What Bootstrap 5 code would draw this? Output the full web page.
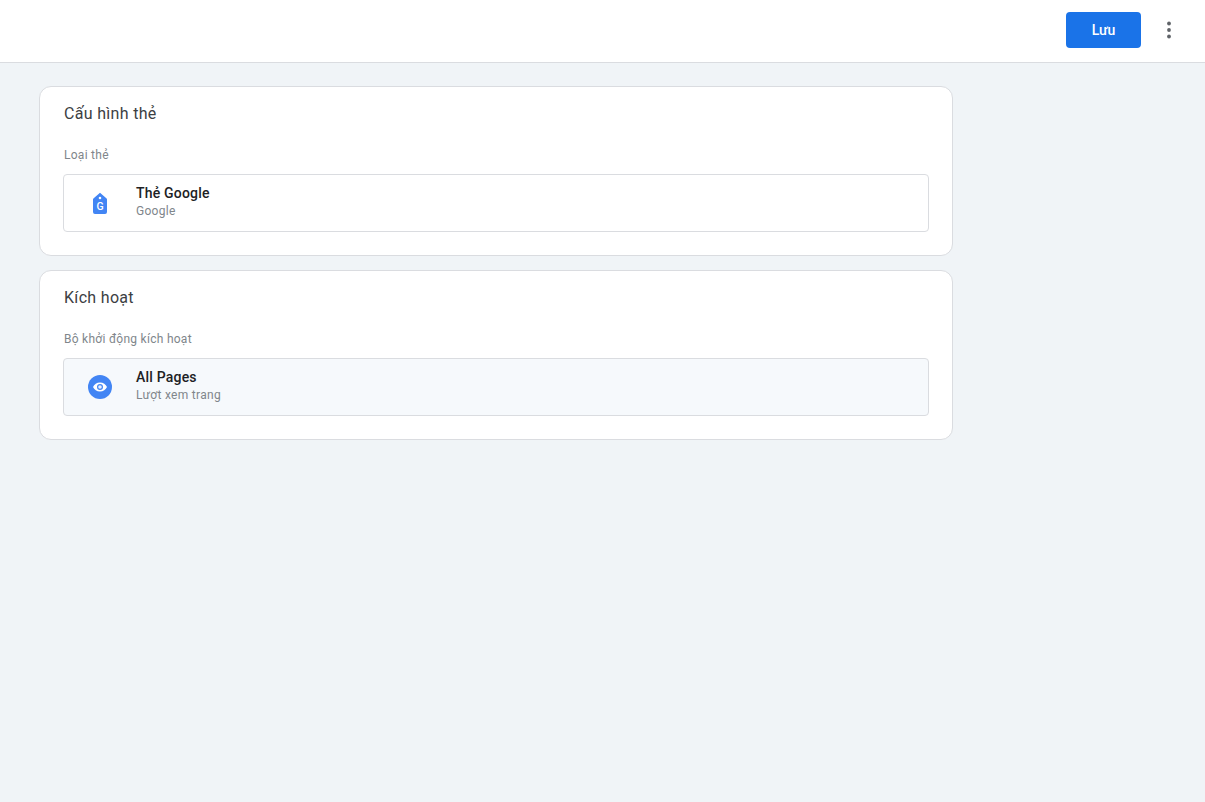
<!DOCTYPE html>
<html lang="vi">
<head>
<meta charset="utf-8">
<title>Thẻ Google</title>
<link rel="stylesheet" href="https://cdn.jsdelivr.net/npm/bootstrap@5.3.0/dist/css/bootstrap.min.css">
<style>
html,body{height:100%}
body{background:#f0f4f7;font-family:Roboto,"Liberation Sans",sans-serif;color:#202124;overflow:hidden}
.top-bar{height:63px;background:#fff;border-bottom:1px solid #dadce0;padding:0 24px 2px 0}
.save-btn{width:75px;height:36px;background:#1a73e8;border:0;border-radius:4px;color:#fff;font-size:14px;font-weight:500;padding:0}
.save-btn:hover{background:#1a73e8;color:#fff}
.dots-btn{width:24px;height:24px;margin-left:16px;border:0;background:none;padding:0;line-height:0}
.page-body{padding:23px 0 0 39px;width:914px;box-sizing:content-box}
.tag-card{width:914px;height:170px;background:#fff;border:1px solid #dadce0;border-radius:12px;padding:0 23px;margin-bottom:14px}
.tag-title{font-size:16px;font-weight:400;line-height:24px;margin:15px 0 0 1px;color:#3c4043;letter-spacing:.32px}
.tag-label{font-size:12px;line-height:16px;color:#80868b;margin:21px 0 11px 1px;letter-spacing:.27px}
.pick-row{height:58px;border:1px solid #dadce0;border-radius:4px;background:#fff}
.pick-row.soft{background:#f6f9fc}
.pick-icon{width:72px;flex:0 0 72px;line-height:0}
.pick-text{margin-top:-3px}
.pick-name{font-size:14px;font-weight:500;line-height:18px;color:#202124;letter-spacing:.2px}
.pick-sub{font-size:12px;line-height:16px;color:#80868b;margin-top:1px;letter-spacing:.3px}
</style>
</head>
<body>
<header class="top-bar d-flex align-items-center justify-content-end">
  <button type="button" class="btn save-btn">Lưu</button>
  <button type="button" class="dots-btn" aria-label="Thêm">
    <svg width="24" height="24" viewBox="0 0 24 24" fill="#5f6368"><circle cx="12" cy="5.500" r="1.900"/><circle cx="12" cy="12" r="1.900"/><circle cx="12" cy="18.500" r="1.900"/></svg>
  </button>
</header>
<main class="page-body">
  <section class="tag-card">
    <h2 class="tag-title">Cấu hình thẻ</h2>
    <div class="tag-label">Loại thẻ</div>
    <div class="pick-row d-flex align-items-center">
      <div class="pick-icon d-flex justify-content-center">
        <svg width="24" height="24" viewBox="0 0 24 24"><path fill="#4285f4" fill-rule="evenodd" d="M12 1.800 18.600 7.400c.3.300.4.600.4 1V21a2 2 0 0 1-2 2H7a2 2 0 0 1-2-2V8.400c0-.4.100-.7.400-1L12 1.800Zm0 3.900a1.300 1.300 0 1 0 0 2.600 1.300 1.300 0 0 0 0-2.600Z"/><text x="12" y="18.600" text-anchor="middle" font-family="Roboto,sans-serif" font-size="10.500" font-weight="500" fill="#fff">G</text></svg>
      </div>
      <div class="pick-text">
        <div class="pick-name">Thẻ Google</div>
        <div class="pick-sub">Google</div>
      </div>
    </div>
  </section>
  <section class="tag-card">
    <h2 class="tag-title">Kích hoạt</h2>
    <div class="tag-label">Bộ khởi động kích hoạt</div>
    <div class="pick-row soft d-flex align-items-center">
      <div class="pick-icon d-flex justify-content-center">
        <svg width="24" height="24" viewBox="0 0 24 24"><circle cx="12" cy="12" r="12" fill="#4285f4"/><path fill="#fff" fill-rule="evenodd" d="M12 7.500c-3.200 0-5.800 1.800-7 4.500 1.200 2.700 3.800 4.500 7 4.500s5.800-1.800 7-4.500c-1.200-2.700-3.800-4.500-7-4.500Zm0 7.500a3 3 0 1 1 0-6 3 3 0 0 1 0 6Z"/><circle cx="12" cy="12" r="1.800" fill="#e8f0fe"/></svg>
      </div>
      <div class="pick-text">
        <div class="pick-name">All Pages</div>
        <div class="pick-sub">Lượt xem trang</div>
      </div>
    </div>
  </section>
</main>
<script src="https://cdn.jsdelivr.net/npm/bootstrap@5.3.0/dist/js/bootstrap.bundle.min.js"></script>
</body>
</html>
